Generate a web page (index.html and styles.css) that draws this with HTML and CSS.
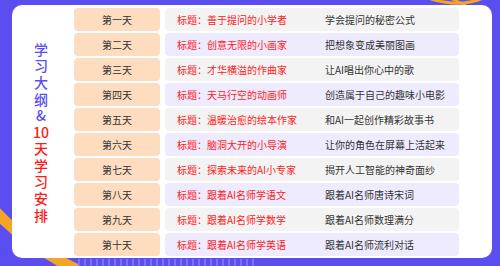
FILE: index.html
```html
<!DOCTYPE html>
<html lang="zh-CN">
<head>
  <meta charset="UTF-8">
  <meta name="viewport" content="width=device-width, initial-scale=1.0">
  <title>学习大纲</title>
  <link rel="stylesheet" href="styles.css">
</head>
<body>
  <svg class="deco" width="500" height="266" viewBox="0 0 500 266">
    <path d="M428 -2 Q452 6 470 2 Q480 0 488 -4" fill="none" stroke="#f4a526" stroke-width="3"/>
    <path d="M446 -3 Q462 2 472 10 Q478 14 484 12" fill="none" stroke="#f4a526" stroke-width="2.5"/>
    <path d="M-4 212 Q30 248 78 270" fill="none" stroke="#f4a526" stroke-width="11"/>
    <rect x="75" y="259" width="180" height="7" fill="url(#bars)"/>
    <defs>
      <pattern id="bars" width="6" height="7" patternUnits="userSpaceOnUse">
        <rect x="0" y="0" width="2" height="7" fill="#7a73ff"/>
      </pattern>
    </defs>
  </svg>

  <div class="board">
    <div class="side">
      <p class="side-text"><span class="purple">学<br>习<br>大<br>纲<br>&amp;<br></span><span class="red">10<br>天<br>学<br>习<br>安<br>排</span></p>
    </div>

    <div class="rows">
      <div class="row">
        <div class="day">第一天</div>
        <div class="info"><span class="title">标题：善于提问的小学者</span><span class="desc">学会提问的秘密公式</span></div>
      </div>
      <div class="row">
        <div class="day">第二天</div>
        <div class="info"><span class="title">标题：创意无限的小画家</span><span class="desc">把想象变成美丽图画</span></div>
      </div>
      <div class="row">
        <div class="day">第三天</div>
        <div class="info"><span class="title">标题：才华横溢的作曲家</span><span class="desc">让AI唱出你心中的歌</span></div>
      </div>
      <div class="row">
        <div class="day">第四天</div>
        <div class="info"><span class="title">标题：天马行空的动画师</span><span class="desc">创造属于自己的趣味小电影</span></div>
      </div>
      <div class="row">
        <div class="day">第五天</div>
        <div class="info"><span class="title">标题：温暖治愈的绘本作家</span><span class="desc">和AI一起创作精彩故事书</span></div>
      </div>
      <div class="row">
        <div class="day">第六天</div>
        <div class="info"><span class="title">标题：脑洞大开的小导演</span><span class="desc">让你的角色在屏幕上活起来</span></div>
      </div>
      <div class="row">
        <div class="day">第七天</div>
        <div class="info"><span class="title">标题：探索未来的AI小专家</span><span class="desc">揭开人工智能的神奇面纱</span></div>
      </div>
      <div class="row">
        <div class="day">第八天</div>
        <div class="info"><span class="title">标题：跟着AI名师学语文</span><span class="desc">跟着AI名师唐诗宋词</span></div>
      </div>
      <div class="row">
        <div class="day">第九天</div>
        <div class="info"><span class="title">标题：跟着AI名师学数学</span><span class="desc">跟着AI名师数理满分</span></div>
      </div>
      <div class="row">
        <div class="day">第十天</div>
        <div class="info"><span class="title">标题：跟着AI名师学英语</span><span class="desc">跟着AI名师流利对话</span></div>
      </div>
    </div>
  </div>
</body>
</html>
```

FILE: styles.css
```css
body {
  margin: 0;
  padding: 5px 8px 0 12px;
  width: 480px;
  height: 261px;
  background-color: #5b4ef0;
  font-family: "Noto Sans CJK SC", "Noto Sans", sans-serif;
  overflow: hidden;
  position: relative;
}

.deco {
  position: absolute;
  left: 0;
  top: 0;
}

.board {
  position: relative;
  display: flex;
  width: 480px;
  height: 253px;
  box-sizing: border-box;
  padding: 3px 33px 2px 0;
  background-color: white;
  border-radius: 10px;
}

.side {
  width: 62px;
  padding-right: 4px;
  box-sizing: border-box;
  display: flex;
  justify-content: center;
  align-items: center;
}

.side-text {
  margin: 0;
  text-align: center;
  font-size: 14px;
  font-weight: 500;
  line-height: 16.6px;
}

.purple {
  color: #5b4ef0;
}

.red {
  color: #ff1a1a;
}

.rows {
  flex: 1;
  display: flex;
  flex-direction: column;
  gap: 2px;
}

.row {
  display: grid;
  grid-template-columns: 86px 1fr;
  gap: 5px;
  height: 23px;
  font-size: 10px;
  line-height: 23px;
}

.day {
  background-color: #fddcc0;
  border-radius: 4px;
  text-align: center;
  color: #333;
}

.info {
  display: flex;
  padding-left: 12px;
  background-color: #f3f3f3;
  border-radius: 4px;
}

.row:nth-child(even) .info {
  background-color: #eeebff;
}

.title {
  width: 148px;
  color: #ff1a1a;
}

.desc {
  color: #333;
}
```
